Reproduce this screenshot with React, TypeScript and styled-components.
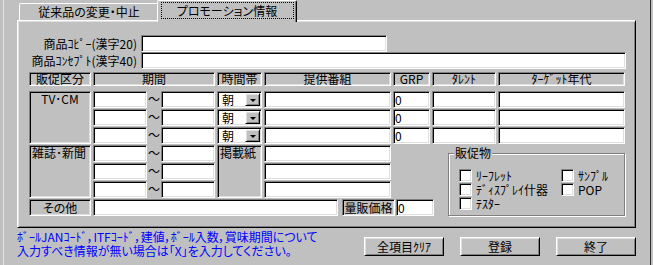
import React from "react";
import styled, { createGlobalStyle, css } from "styled-components";

const GlobalStyle = createGlobalStyle`
  html, body {
    margin: 0;
    padding: 0;
    background: #c0c0c0;
  }
  body {
    width: 653px;
    height: 265px;
    overflow: hidden;
    font-family: "Noto Sans CJK JP", "Noto Sans", sans-serif;
    font-size: 12px;
    font-feature-settings: "palt";
    color: #000;
  }
`;

const sunken = css`
  box-sizing: border-box;
  border: 1px solid;
  border-color: #808080 #fff #fff #808080;
  box-shadow: inset 1px 1px 0 #000, inset -1px -1px 0 #dfdfdf;
`;

const raised = css`
  box-sizing: border-box;
  border: 1px solid;
  border-color: #fff #000 #000 #fff;
  box-shadow: inset 1px 1px 0 #dfdfdf, inset -1px -1px 0 #808080;
`;

const Frame = styled.div`
  box-sizing: border-box;
  margin-left: 3px;
  width: 648px;
  height: 265px;
  padding-left: 13px;
  border-left: 1px solid #e4e4e4;
  border-right: 1px solid #303030;
`;

const TabStrip = styled.div`
  position: relative;
  z-index: 1;
  display: flex;
  align-items: flex-end;
  height: 22px;
  margin-bottom: -2px;
  padding-left: 2px;
`;

const Tab = styled.div<{ $active?: boolean }>`
  box-sizing: border-box;
  display: flex;
  align-items: ${p => (p.$active ? "flex-start" : "center")};
  justify-content: center;
  width: 140px;
  height: ${p => (p.$active ? 22 : 17)}px;
  margin-bottom: ${p => (p.$active ? 0 : 2)}px;
  margin-left: ${p => (p.$active ? -2 : 0)}px;
  background: #c0c0c0;
  border: 1px solid;
  border-bottom: none;
  border-color: #fff #000 transparent #fff;
  border-radius: 2px 2px 0 0;
  box-shadow: inset -1px 0 0 #808080;
  line-height: 14px;
  white-space: nowrap;
`;

const TabFocus = styled.span`
  box-sizing: border-box;
  display: flex;
  align-items: center;
  justify-content: center;
  width: 133px;
  height: 17px;
  margin-top: 1px;
  border: 1px dotted #000;
`;

const Panel = styled.div`
  ${raised}
  width: 619px;
  height: 208px;
  padding: 14px 0 0 11px;
`;

const CopyRows = styled.div`
  display: grid;
  grid-template-columns: 110px auto;
  grid-auto-rows: 17px;
  column-gap: 2px;
`;

const CopyLabel = styled.div`
  padding-right: 2px;
  text-align: right;
  line-height: 17px;
  white-space: nowrap;
`;

const Field = styled.input<{ $w?: number }>`
  ${sunken}
  display: block;
  width: ${p => (p.$w ? `${p.$w}px` : "100%")};
  height: 17px;
  margin: 0;
  padding: 0 1px;
  background: #fff;
  font: inherit;
  font-size: 12px;
  line-height: 13px;
  color: #000;
  outline: none;
`;

const Table = styled.div`
  display: grid;
  grid-template-columns: 62px 54px 10px 54px 45px 127px 37px 64px 127px;
  grid-template-rows: 18px repeat(7, 17px);
  column-gap: 2px;
  row-gap: 1px;
  margin-top: 3px;
`;

const HeadCell = styled.div<{ $cols?: number }>`
  ${sunken}
  grid-column: span ${p => p.$cols ?? 1};
  align-self: start;
  height: 14px;
  text-align: center;
  line-height: 12px;
  white-space: nowrap;
  background: #c0c0c0;
`;

const GroupLabel = styled.div<{ $rows?: number; $align?: string; $middle?: boolean }>`
  ${sunken}
  grid-row: span ${p => p.$rows ?? 1};
  display: flex;
  align-items: ${p => (p.$middle ? "center" : "flex-start")};
  justify-content: ${p => (p.$align === "left" ? "flex-start" : "center")};
  padding: ${p => (p.$middle ? "0" : "1px 2px 0")};
  line-height: 12px;
  white-space: nowrap;
  background: #c0c0c0;
`;

const Tilde = styled.div`
  display: flex;
  align-items: center;
  justify-content: center;
  padding-bottom: 1px;
  line-height: 12px;
`;

const Combo = styled.div`
  ${sunken}
  display: flex;
  align-items: center;
  padding: 1px;
  background: #fff;
`;

const ComboText = styled.span`
  flex: 1;
  padding-left: 3px;
  line-height: 13px;
`;

const DropButton = styled.div`
  ${raised}
  display: flex;
  align-items: center;
  justify-content: center;
  width: 15px;
  height: 13px;
  background: #c0c0c0;
`;

const Arrow = styled.span`
  width: 0;
  height: 0;
  margin-top: 2px;
  border-left: 3px solid transparent;
  border-right: 3px solid transparent;
  border-top: 3px solid #000;
`;

const OtherRow = styled.div`
  grid-column: span 5;
  display: flex;
  gap: 4px;
  width: 341px;
`;

const PriceGroup = styled.div`
  display: flex;
  gap: 1px;
`;

const PriceLabel = styled.div`
  ${sunken}
  width: 53px;
  height: 17px;
  line-height: 15px;
  text-align: center;
  white-space: nowrap;
`;

const GroupBox = styled.div`
  grid-area: 5 / 7 / 9 / 10;
  align-self: end;
  justify-self: end;
  position: relative;
  box-sizing: border-box;
  width: 177px;
  height: 63px;
  padding: 14px 0 0 10px;
  border: 1px solid #808080;
  box-shadow: inset 1px 1px 0 #fff, 1px 1px 0 #fff;
`;

const GroupTitle = styled.span`
  position: absolute;
  top: -8px;
  left: 5px;
  padding: 0 1px;
  line-height: 14px;
  background: #c0c0c0;
`;

const CheckGrid = styled.div`
  display: grid;
  grid-auto-flow: column;
  grid-template-rows: repeat(3, 14px);
  grid-template-columns: 102px auto;
`;

const CheckItem = styled.label`
  display: flex;
  align-items: center;
  gap: 4px;
  line-height: 13px;
  white-space: nowrap;
`;

const CheckBox = styled.span`
  ${sunken}
  width: 13px;
  height: 13px;
  background: #fff;
`;

const BottomRow = styled.div`
  display: flex;
  justify-content: space-between;
  width: 619px;
`;

const Note = styled.div`
  padding-top: 2px;
  color: #0000ff;
  line-height: 14px;
  white-space: nowrap;
`;

const ButtonBar = styled.div`
  display: flex;
  gap: 16px;
  padding-top: 9px;
`;

const Button = styled.button`
  ${raised}
  width: 80px;
  height: 19px;
  padding: 0;
  background: #c0c0c0;
  font: inherit;
  line-height: 16px;
  color: #000;
`;

const timeRow = () => (
  <>
    <Field />
    <Tilde>～</Tilde>
    <Field />
    <Combo>
      <ComboText>朝</ComboText>
      <DropButton>
        <Arrow />
      </DropButton>
    </Combo>
    <Field />
    <Field defaultValue="0" />
    <Field />
    <Field />
  </>
);

const pressRow = (first: boolean) => (
  <>
    <Field />
    <Tilde>～</Tilde>
    <Field />
    {first && <GroupLabel $rows={3} $align="left">掲載紙</GroupLabel>}
    <Field />
  </>
);

const goods = ["ﾘｰﾌﾚｯﾄ", "ﾃﾞｨｽﾌﾟﾚｲ什器", "ﾃｽﾀｰ", "ｻﾝﾌﾟﾙ", "POP"];

export default function App() {
  return (
    <>
      <GlobalStyle />
      <Frame>
        <TabStrip>
          <Tab>従来品の変更・中止</Tab>
          <Tab $active>
            <TabFocus>プロモーション情報</TabFocus>
          </Tab>
        </TabStrip>
        <Panel>
          <CopyRows>
            <CopyLabel>商品ｺﾋﾟｰ(漢字20)</CopyLabel>
            <Field $w={246} />
            <CopyLabel>商品ｺﾝｾﾌﾟﾄ(漢字40)</CopyLabel>
            <Field $w={485} />
          </CopyRows>
          <Table>
            <HeadCell>販促区分</HeadCell>
            <HeadCell $cols={3}>期間</HeadCell>
            <HeadCell>時間帯</HeadCell>
            <HeadCell>提供番組</HeadCell>
            <HeadCell>GRP</HeadCell>
            <HeadCell>ﾀﾚﾝﾄ</HeadCell>
            <HeadCell>ﾀｰｹﾞｯﾄ年代</HeadCell>

            <GroupLabel $rows={3}>TV･CM</GroupLabel>
            {timeRow()}
            {timeRow()}
            {timeRow()}

            <GroupLabel $rows={3} $align="left">雑誌･新聞</GroupLabel>
            {pressRow(true)}
            {pressRow(false)}
            {pressRow(false)}

            <GroupBox>
              <GroupTitle>販促物</GroupTitle>
              <CheckGrid>
                {goods.map(g => (
                  <CheckItem key={g}>
                    <CheckBox />
                    {g}
                  </CheckItem>
                ))}
              </CheckGrid>
            </GroupBox>

            <GroupLabel $middle>その他</GroupLabel>
            <OtherRow>
              <Field $w={245} />
              <PriceGroup>
                <PriceLabel>量販価格</PriceLabel>
                <Field $w={38} defaultValue="0" />
              </PriceGroup>
            </OtherRow>
          </Table>
        </Panel>
        <BottomRow>
          <Note>
            ﾎﾞｰﾙJANｺｰﾄﾞ，ITFｺｰﾄﾞ，建値，ﾎﾞｰﾙ入数，賞味期間について
            <br />
            入力すべき情報が無い場合は「X」を入力してください。
          </Note>
          <ButtonBar>
            <Button>全項目ｸﾘｱ</Button>
            <Button>登録</Button>
            <Button>終了</Button>
          </ButtonBar>
        </BottomRow>
      </Frame>
    </>
  );
}
